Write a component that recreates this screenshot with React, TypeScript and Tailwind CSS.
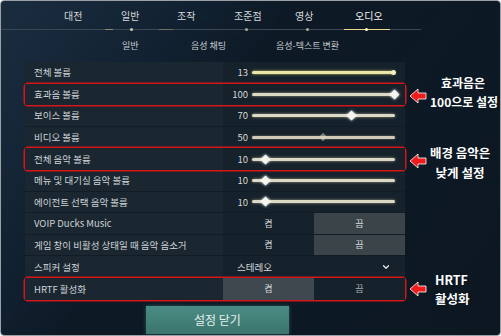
import { ChevronDown } from "lucide-react";

const font = { fontFamily: '"Noto Sans CJK KR", "Noto Sans", sans-serif' };

type Row =
  | { kind: "slider"; label: string; value: number; hl?: boolean; gold?: boolean; dim?: boolean }
  | { kind: "toggle"; label: string; on: boolean; hl?: boolean }
  | { kind: "select"; label: string; value: string };

const rows: Row[] = [
  { kind: "slider", label: "전체 볼륨", value: 13, gold: true },
  { kind: "slider", label: "효과음 볼륨", value: 100, hl: true },
  { kind: "slider", label: "보이스 볼륨", value: 70 },
  { kind: "slider", label: "비디오 볼륨", value: 50, dim: true },
  { kind: "slider", label: "전체 음악 볼륨", value: 10, hl: true },
  { kind: "slider", label: "메뉴 및 대기실 음악 볼륨", value: 10 },
  { kind: "slider", label: "에이전트 선택 음악 볼륨", value: 10 },
  { kind: "toggle", label: "VOIP Ducks Music", on: false },
  { kind: "toggle", label: "게임 창이 비활성 상태일 때 음악 음소거", on: false },
  { kind: "select", label: "스피커 설정", value: "스테레오" },
  { kind: "toggle", label: "HRTF 활성화", on: true, hl: true },
];

const Slider = ({ value, gold, dim }: { value: number; gold?: boolean; dim?: boolean }) => {
  const pos = gold ? 100 : value;
  return (
    <div className="flex items-center h-full">
      <span className="w-[25px] text-right text-[9.5px] text-[#d6d9dc]">{value}</span>
      <div className="relative ml-[4px] w-[143px] h-[10px] flex items-center">
        <div
          className={
            gold
              ? "w-full h-[3px] rounded-full bg-[#ece7a6] shadow-[0_0_3px_#bdb774]"
              : dim
              ? "w-full h-[3px] rounded-full bg-[#cfcbb8] shadow-[0_0_2px_#8e8b7c]"
              : "w-full h-[3px] rounded-full bg-[#dcd8c6] shadow-[0_0_3px_#9a967f]"
          }
        />
        <div
          className={
            gold
              ? "absolute w-[5px] h-[5px] rounded-full bg-[#f4f0c4]"
              : dim
              ? "absolute w-[6px] h-[6px] rotate-45 bg-[#d9d6c8] opacity-50"
              : "absolute w-[7px] h-[7px] rotate-45 bg-[#f5f4ee] shadow-[0_0_3px_#ffffff]"
          }
          style={{ left: `calc(${pos}% - 4px)` }}
        />
      </div>
    </div>
  );
};

const Arrow = () => (
  <svg width="18" height="16" viewBox="0 0 18 16">
    <polygon points="1,8 9,1 9,5 17,5 17,11 9,11 9,15" fill="#ee1c1c" stroke="#ffffff" strokeWidth="0.8" />
  </svg>
);

export default function App() {
  return (
    <div
      style={font}
      className="relative w-[501px] h-[336px] overflow-hidden rounded-[4px] border border-[#9aa0a6] bg-[linear-gradient(125deg,#1a2d3f_0%,#132334_22%,#0d1a26_40%,#0c1721_100%)]"
    >
      {/* top tabs */}
      <div className="flex h-[28px] items-center pl-[63px] text-[10px] text-[#d5d9dc]">
        <span className="w-[57px] text-left">대전</span>
        <span className="w-[56px]">일반</span>
        <span className="w-[57px]">조작</span>
        <span className="w-[61px]">조준점</span>
        <span className="w-[60px]">영상</span>
        <span className="text-[#f1f1ee]">오디오</span>
      </div>
      <div className="relative h-[1px] w-[420px] bg-[#3c4751]">
        <div className="absolute left-[104px] top-0 h-[1px] w-[8px] bg-[#8e8a6e]" />
        <div className="absolute left-[158px] top-0 h-[1px] w-[14px] bg-[#6f6f60]" />
        <div className="absolute left-[129px] top-[-1px] h-[3px] w-[3px] rounded-full bg-[#c9c7b4]" />
        <div className="absolute left-[244px] top-[-1px] h-[3px] w-[3px] rounded-full bg-[#a9a89a]" />
        <div className="absolute left-[305px] top-[-1px] h-[3px] w-[3px] rounded-full bg-[#a9a89a]" />
        <div className="absolute left-[343px] top-0 h-[1px] w-[46px] bg-[#ecd98e]" />
        <div className="absolute left-[364px] top-[-1px] h-[3px] w-[3px] rounded-full bg-[#fff3c0]" />
      </div>
      {/* sub tabs */}
      <div className="flex h-[32px] items-center pl-[121px] text-[9px] text-[#c6cbcf]">
        <span className="w-[69px]">일반</span>
        <span className="w-[85px]">음성 채팅</span>
        <span>음성-텍스트 변환</span>
      </div>

      {/* settings rows */}
      <div className="ml-[24px] w-[380px] flex flex-col">
        {rows.map((r) => (
          <div
            key={r.label}
            className={
              r.hl
                ? "flex h-[21.6px] rounded-[3px] ring-[1.5px] ring-[#d4161a] relative z-10"
                : "flex h-[21.6px] border-b border-[#111c24]"
            }
          >
            <div className="w-[198px] flex items-center pl-[9px] text-[9.5px] text-[#cdd2d6] bg-[#1a2731] whitespace-nowrap">
              {r.label}
            </div>
            <div className="flex-1 bg-[#16222b]">
              {r.kind === "slider" && <Slider value={r.value} gold={r.gold} dim={r.dim} />}
              {r.kind === "toggle" && (
                <div className="flex h-full text-[9px] text-[#d8dcdf]">
                  <div className={r.on ? "w-1/2 flex items-center justify-center bg-[#3e484e]" : "w-1/2 flex items-center justify-center"}>켬</div>
                  <div className={r.on ? "w-1/2 flex items-center justify-center text-[#a8aeb2]" : "w-1/2 flex items-center justify-center bg-[#3a4449]"}>끔</div>
                </div>
              )}
              {r.kind === "select" && (
                <div className="flex h-full items-center justify-between pl-[14px] pr-[14px] text-[9.5px] text-[#d6d9dc]">
                  <span>{r.value}</span>
                  <ChevronDown className="w-[10px] h-[10px] text-[#e6e8ea]" strokeWidth={3} />
                </div>
              )}
            </div>
          </div>
        ))}
      </div>

      {/* close button */}
      <div className="mt-[6px] ml-[145px] w-[143px] h-[28px] flex items-center justify-center bg-[linear-gradient(180deg,#4a8c84,#3b746d)] shadow-[0_0_4px_#2a5450] text-[12px] text-[#e4efed]">
        설정 닫기
      </div>

      {/* annotations */}
      <div className="absolute left-[408px] top-[87px]"><Arrow /></div>
      <div className="absolute left-[429px] top-[72px] w-[66px] text-[12px] font-bold leading-[19px] text-white text-center whitespace-nowrap">
        효과음은<br />100으로 설정
      </div>
      <div className="absolute left-[408px] top-[152px]"><Arrow /></div>
      <div className="absolute left-[429px] top-[142px] w-[60px] text-[12.5px] font-bold leading-[20px] text-white text-center whitespace-nowrap">
        배경 음악은<br />낮게 설정
      </div>
      <div className="absolute left-[408px] top-[280px]"><Arrow /></div>
      <div className="absolute left-[434px] top-[269px] text-[12.5px] font-bold leading-[19px] text-white text-left whitespace-nowrap">
        HRTF<br />활성화
      </div>
    </div>
  );
}
